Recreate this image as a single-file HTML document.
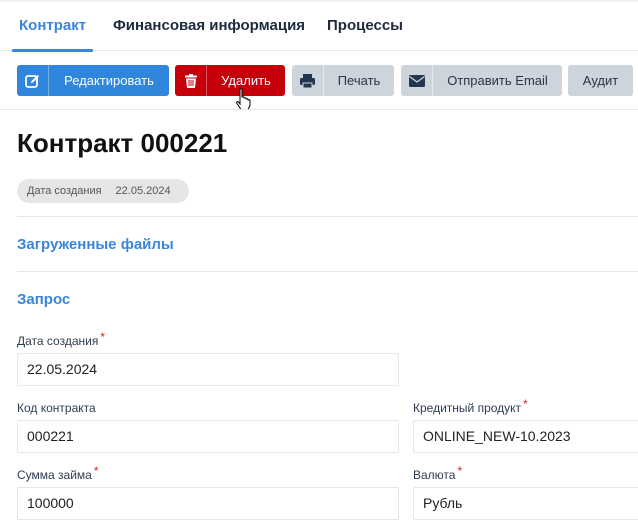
<!DOCTYPE html>
<html><head><meta charset="utf-8"><style>
*{box-sizing:border-box;margin:0;padding:0}
body{width:638px;height:527px;overflow:hidden;background:#fff;font-family:"Liberation Sans","DejaVu Sans",sans-serif;color:#1a2433;position:relative}
.abs{position:absolute}
.tab{position:absolute;top:17px;font-size:15px;font-weight:bold;color:#1e2a3d}
.btn{position:absolute;top:65px;height:31px;border-radius:3px;display:flex;align-items:center;font-size:13px}
.btn .ic{width:32px;height:100%;display:flex;align-items:center;justify-content:center;border-right:1px solid rgba(255,255,255,.35)}
.btn .tx{flex:1;text-align:center}
.gray{background:#ced4dc;color:#2a3547}
.gray .ic{border-right:1px solid #e6e9ee}
.hr{position:absolute;left:17px;right:0;height:1px;background:#e3e6ea}
.lbl{position:absolute;font-size:12px;color:#2f3d52}
.lbl i{color:#d0262b;font-style:normal;font-size:12px;position:relative;top:-4px;margin-left:2px}
.inp{position:absolute;height:33px;border:1px solid #e3e6ea;border-radius:2px;font-size:14px;padding-left:9px;line-height:31px;color:#222}
.sec{position:absolute;left:17px;font-size:15px;font-weight:bold;color:#3a86dd}
</style></head><body>
<div class="abs" style="left:0;right:0;top:0;height:2px;background:#eef0f3"></div>
<div class="tab" style="left:19px;color:#3a86dd">Контракт</div>
<div class="tab" style="left:113px">Финансовая информация</div>
<div class="tab" style="left:327px">Процессы</div>
<div class="abs" style="left:0;right:0;top:50px;height:1px;background:#e3e6ea"></div>
<div class="abs" style="left:12px;width:81px;top:49px;height:3px;background:#3a86dd;border-radius:1px"></div>

<div class="btn" style="left:17px;width:152px;background:#2f86dc;color:#fff">
<div class="ic"><svg width="15" height="14" viewBox="0 0 15 14"><rect x="1" y="2" width="11" height="11" rx="2" fill="none" stroke="#fff" stroke-width="1.8"/><path d="M6 9 L6.5 7 L12.5 1 L14 2.5 L8 8.5Z" fill="#fff"/></svg></div><div class="tx">Редактировать</div></div>
<div class="btn" style="left:175px;width:110px;background:#c6000b;color:#fff">
<div class="ic"><svg width="12" height="14" viewBox="0 0 12 14"><rect x="0" y="1.5" width="12" height="2" fill="#fff"/><rect x="4" y="0" width="4" height="2" fill="#fff"/><path d="M1 4.5h10l-1 9.5h-8z" fill="#fff"/><path d="M4 6v6M6 6v6M8 6v6" stroke="#c6000b" stroke-width="1"/></svg></div><div class="tx">Удалить</div></div>
<div class="btn gray" style="left:292px;width:102px">
<div class="ic"><svg width="15" height="14" viewBox="0 0 15 14"><rect x="3" y="0" width="9" height="4" fill="#233650"/><rect x="0" y="4" width="15" height="7" rx="1.5" fill="#233650"/><rect x="3" y="9" width="9" height="5" fill="#233650" stroke="#ced4dc" stroke-width="1"/></svg></div><div class="tx">Печать</div></div>
<div class="btn gray" style="left:401px;width:161px">
<div class="ic"><svg width="16" height="12" viewBox="0 0 16 12"><rect x="0" y="0" width="16" height="12" rx="1.5" fill="#233650"/><path d="M0.5 1.5 L8 7 L15.5 1.5" fill="none" stroke="#ced4dc" stroke-width="1.3"/></svg></div><div class="tx">Отправить Email</div></div>
<div class="btn gray" style="left:568px;width:65px"><div class="tx">Аудит</div></div>
<svg class="abs" style="left:236px;top:88px" width="18" height="24" viewBox="0 0 18 24"><path d="M4 1.5c0-1 2-1 2 0v8c0-1 2-1 2 0v1c0-1 2-1 2 0v1c0-1 2-1 2 0v1c0-1 2-1 2 0v5l-2 4h-7l-4-6c-1-1.5 0.5-2.5 1.5-1.5l1.5 2z" fill="#fff" stroke="#000" stroke-width="1"/></svg>
<div class="abs" style="left:0;right:0;top:109px;height:1px;background:#e3e6ea"></div>

<div class="abs" style="left:17px;top:128px;font-size:26px;font-weight:bold;color:#111">Контракт 000221</div>
<div class="abs" style="left:17px;top:179px;width:172px;height:24px;border-radius:12px;background:#e6e6e6;font-size:11px;color:#555;line-height:24px;padding-left:10px">Дата создания<span style="margin-left:14px">22.05.2024</span></div>
<div class="hr" style="top:216px"></div>
<div class="sec" style="top:236px">Загруженные файлы</div>
<div class="hr" style="top:271px"></div>
<div class="sec" style="top:291px">Запрос</div>

<div class="lbl" style="left:17px;top:334px">Дата создания<i>*</i></div>
<div class="inp" style="left:17px;top:353px;width:382px">22.05.2024</div>
<div class="lbl" style="left:17px;top:401px">Код контракта</div>
<div class="inp" style="left:17px;top:420px;width:382px">000221</div>
<div class="lbl" style="left:413px;top:401px">Кредитный продукт<i>*</i></div>
<div class="inp" style="left:413px;top:420px;width:240px">ONLINE_NEW-10.2023</div>
<div class="lbl" style="left:17px;top:468px">Сумма займа<i>*</i></div>
<div class="inp" style="left:17px;top:487px;width:382px">100000</div>
<div class="lbl" style="left:413px;top:468px">Валюта<i>*</i></div>
<div class="inp" style="left:413px;top:487px;width:240px">Рубль</div>
</body></html>
